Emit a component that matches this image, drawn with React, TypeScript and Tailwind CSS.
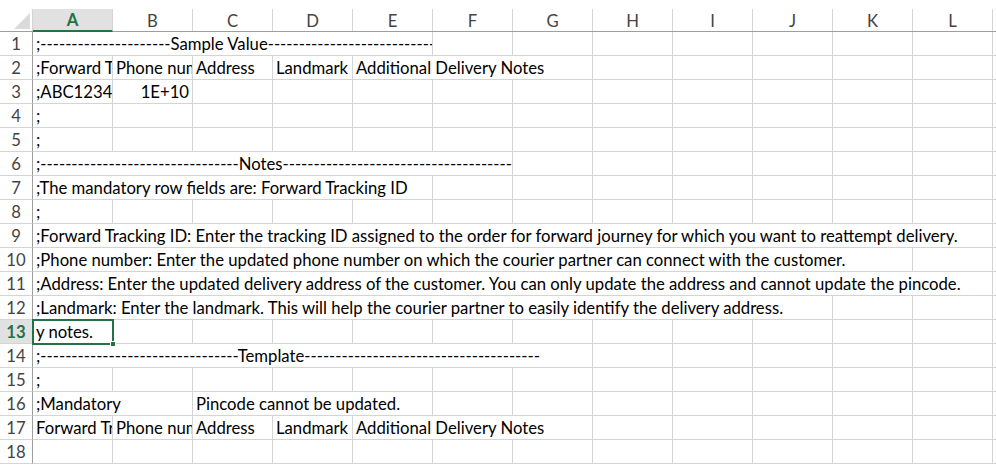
import React from "react";

type Seg = { c: number; span?: number; text: string; right?: boolean };

const COLS = ["A", "B", "C", "D", "E", "F", "G", "H", "I", "J", "K", "L"];

const d = (n: number) => "-".repeat(n);

const SPAN: Record<number, string> = {
  1: "col-span-1",
  2: "col-span-2",
  3: "col-span-3",
  4: "col-span-4",
  5: "col-span-5",
  6: "col-span-6",
  7: "col-span-7",
  8: "col-span-8",
  9: "col-span-9",
  10: "col-span-10",
  11: "col-span-11",
  12: "col-span-12",
};

const rows: Seg[][] = [
  [{ c: 0, span: 5, text: ";" + d(21) + "Sample Value" + d(32) }],
  [
    { c: 0, text: ";Forward Tracking ID" },
    { c: 1, text: "Phone number" },
    { c: 2, text: "Address" },
    { c: 3, text: "Landmark" },
    { c: 4, span: 3, text: "Additional Delivery Notes" },
  ],
  [
    { c: 0, text: ";ABC123456" },
    { c: 1, text: "1E+10", right: true },
  ],
  [{ c: 0, text: ";" }],
  [{ c: 0, text: ";" }],
  [{ c: 0, span: 6, text: ";" + d(32) + "Notes" + d(39) }],
  [{ c: 0, span: 5, text: ";The mandatory row fields are: Forward Tracking ID" }],
  [{ c: 0, text: ";" }],
  [
    {
      c: 0,
      span: 12,
      text: ";Forward Tracking ID: Enter the tracking ID assigned to the order for forward journey for which you want to reattempt delivery.",
    },
  ],
  [
    {
      c: 0,
      span: 11,
      text: ";Phone number: Enter the updated phone number on which the courier partner can connect with the customer.",
    },
  ],
  [
    {
      c: 0,
      span: 12,
      text: ";Address: Enter the updated delivery address of the customer. You can only update the address and cannot update the pincode.",
    },
  ],
  [
    {
      c: 0,
      span: 10,
      text: ";Landmark: Enter the landmark. This will help the courier partner to easily identify the delivery address.",
    },
  ],
  [{ c: 0, text: "y notes." }],
  [{ c: 0, span: 7, text: ";" + d(32) + "Template" + d(38) }],
  [{ c: 0, text: ";" }],
  [
    { c: 0, span: 2, text: ";Mandatory" },
    { c: 2, span: 3, text: "Pincode cannot be updated." },
  ],
  [
    { c: 0, text: "Forward Tracking ID" },
    { c: 1, text: "Phone number" },
    { c: 2, text: "Address" },
    { c: 3, text: "Landmark" },
    { c: 4, span: 3, text: "Additional Delivery Notes" },
  ],
  [],
];

const ACTIVE_ROW = 13;

function Row({ n, segs }: { n: number; segs: Seg[] }) {
  const active = n === ACTIVE_ROW;
  const cells: React.ReactNode[] = [];
  let col = 0;
  while (col < 12) {
    const seg = segs.find((s) => s.c === col);
    if (seg) {
      const span = seg.span ?? 1;
      cells.push(
        <div
          key={col}
          className={`${SPAN[span]} relative flex items-center border-r border-b border-[#d4d4d4] overflow-hidden whitespace-nowrap px-[3px] ${
            seg.right ? "justify-end" : ""
          }`}
        >
          <span className="pt-[2px]">{seg.text}</span>
        </div>
      );
      col += span;
    } else {
      cells.push(<div key={col} className="border-r border-b border-[#d4d4d4]" />);
      col += 1;
    }
  }

  return (
    <div className="grid grid-cols-[33px_repeat(12,80px)_1fr] h-6">
      <div
        className={`flex items-center justify-center border-r border-b border-r-[#9e9e9e] border-b-[#d4d4d4] pt-[2px] ${
          active ? "bg-[#e1e1e1] text-[#217346] font-bold" : "text-[#444]"
        }`}
      >
        {n}
      </div>
      {cells}
      <div className="border-b border-[#d4d4d4]" />
      {active && (
        <div className="absolute left-[32px] w-[82px] h-[26px] -mt-px border-2 border-[#217346] pointer-events-none">
          <div className="absolute -right-[4px] -bottom-[4px] w-[6px] h-[6px] bg-[#217346] border border-white" />
        </div>
      )}
    </div>
  );
}

export default function App() {
  return (
    <div
      className="w-[996px] h-[465px] overflow-hidden bg-white text-black text-[16.7px] leading-none relative"
      style={{ fontFamily: "Lato, 'Liberation Sans', sans-serif" }}
    >
      <div className="h-[9px]" />
      <div className="grid grid-cols-[33px_repeat(12,80px)_1fr] h-[23px] border-b border-[#9e9e9e] text-[#444]">
        <div className="relative border-r border-[#d4d4d4]">
          <svg className="absolute left-0 top-0" width="33" height="22" viewBox="0 0 33 22">
            <polygon points="14,20 30,20 30,4" fill="#dadada" />
          </svg>
        </div>
        {COLS.map((c, i) => (
          <div
            key={c}
            className={`flex items-center justify-center border-r border-[#d4d4d4] pt-[2px] ${
              i === 0
                ? "bg-[#e1e1e1] text-[#217346] font-bold border-b-2 border-b-[#217346] -mb-px"
                : ""
            }`}
          >
            {c}
          </div>
        ))}
        <div />
      </div>
      <div className="relative">
        {rows.map((segs, i) => (
          <Row key={i} n={i + 1} segs={segs} />
        ))}
      </div>
    </div>
  );
}
